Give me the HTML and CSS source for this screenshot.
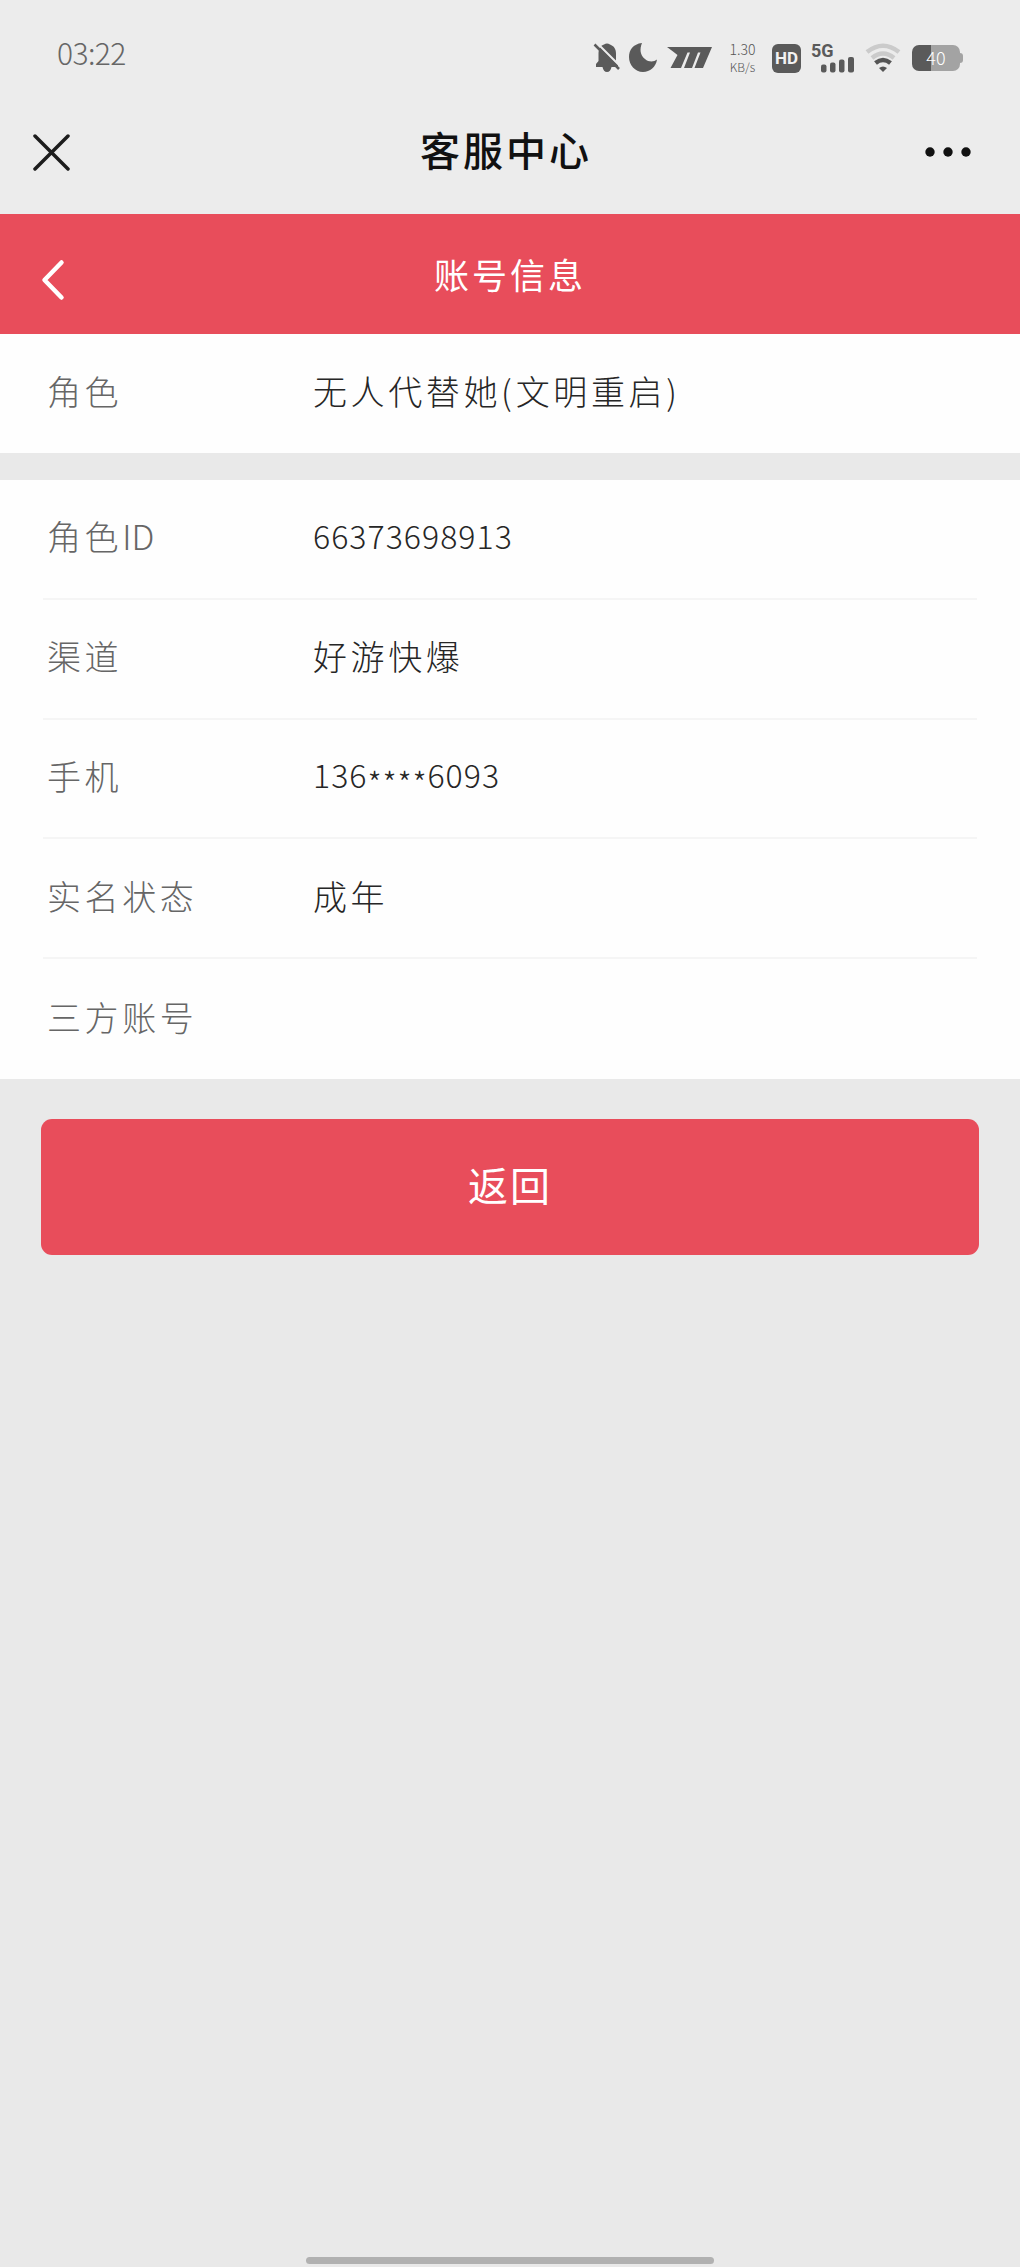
FILE: index.html
```html
<!DOCTYPE html>
<html lang="zh-CN">
<head>
  <meta charset="utf-8">
  <title>客服中心</title>
  <link rel="stylesheet" href="styles.css">
</head>
<body>
<div id="container">

  <div id="status_bar">
    <span class="time">03:22</span>
    <div class="status_icons">
      <svg class="bell" width="28" height="32" viewBox="0 0 28 32">
        <path d="M3 25V22L5.500 19V12C5.500 6 8 3.500 11 2.500Q14 .500 17 2.500C21 4 23 7 23 12V19L25 22V25H18.500Q17.500 30 14 30Q10.500 30 9.500 25Z" fill="#5a5a5a"/>
        <path d="M3 0L28 25" stroke="#ececec" stroke-width="2"/>
        <path d="M1.500 2.500L26 27" stroke="#5a5a5a" stroke-width="2.500"/>
      </svg>
      <svg class="moon" width="30" height="32" viewBox="0 0 30 32">
        <path d="M14 1C5 2 1 8 1 15C1 23 7 30 15 30C22 30 28 25 29 17.500C26 20 21 20.500 17 17C12 13 11.500 7 14 1Z" fill="#5a5a5a"/>
      </svg>
      <svg class="mlogo" width="46" height="24" viewBox="0 0 46 24">
        <path d="M0 1H45L36 22H27.500L33.500 6.500H31L25 22H17L23 6.500H20.500L14 22H3.500L10.500 9L6 5.500Z" fill="#5a5a5a"/>
      </svg>
      <div class="speed"><span>1.30</span><span>KB/s</span></div>
      <span class="hd">HD</span>
      <div class="signal">
        <span>5G</span>
        <svg width="34" height="17" viewBox="0 0 34 17" fill="#5a5a5a">
          <rect x="0" y="8.500" width="5.500" height="8" rx="2"/>
          <rect x="9" y="6.500" width="5.500" height="10" rx="2"/>
          <rect x="18" y="3.500" width="5.500" height="13" rx="2"/>
          <rect x="27" y="1" width="6" height="15.500" rx="2"/>
        </svg>
      </div>
      <svg class="wifi" width="36" height="30" viewBox="0 0 36 30" fill="none">
        <path d="M2 9Q18 -3.500 34 9" stroke="#cbcbcb" stroke-width="4.500"/>
        <path d="M7 15Q18 6 29 15" stroke="#cbcbcb" stroke-width="4.500"/>
        <path d="M10.500 20Q18 14 25.500 20" stroke="#555" stroke-width="4.500"/>
        <path d="M14 25Q18 22 22 25L18 29Z" fill="#555"/>
      </svg>
      <div class="battery"><span>40</span></div>
    </div>
  </div>

  <div id="top_menu">
    <svg width="37" height="37" viewBox="0 0 37 37">
      <path d="M2 2L35 35M35 2L2 35" stroke="#1c1c1c" stroke-width="3.500" stroke-linecap="round"/>
    </svg>
    <h1>客服中心</h1>
    <svg width="48" height="12" viewBox="0 0 48 12" fill="#111">
      <circle cx="6" cy="6" r="4.700"/>
      <circle cx="24" cy="6" r="4.700"/>
      <circle cx="42" cy="6" r="4.700"/>
    </svg>
  </div>

  <div id="page_header">
    <svg width="24" height="42" viewBox="0 0 24 42">
      <path d="M20.500 3.500L3.500 21L20.500 38.500" fill="none" stroke="#fff" stroke-width="4.500" stroke-linecap="round" stroke-linejoin="round"/>
    </svg>
    <h2>账号信息</h2>
  </div>

  <div class="list">
    <div class="row"><span class="label">角色</span><span class="value">无人代替她<i class="open_paren">(</i>文明重启<i>)</i></span></div>
  </div>

  <div class="list">
    <div class="row"><span class="label">角色<i>ID</i></span><span class="value number">66373698913</span></div>
    <div class="row"><span class="label">渠道</span><span class="value">好游快爆</span></div>
    <div class="row"><span class="label">手机</span><span class="value number">136<i class="mask">****</i>6093</span></div>
    <div class="row"><span class="label">实名状态</span><span class="value">成年</span></div>
    <div class="row"><span class="label">三方账号</span><span class="value"></span></div>
  </div>

  <button class="back_btn">返回</button>

  <div id="home_bar"></div>

</div>
</body>
</html>
```

FILE: styles.css
```css
html, body {
  height: 100%;
  margin: 0;
}
body {
  background-color: #e9e9e9;
  font-family: "Noto Sans CJK SC", sans-serif;
  font-weight: 300;
  overflow: hidden;
}
i {
  font-style: normal;
  letter-spacing: 0;
}
svg {
  display: block;
  flex: none;
}

#container {
  height: 100%;
  display: flex;
  flex-direction: column;
}

/* status bar */
#status_bar {
  height: 90px;
  box-sizing: border-box;
  padding: 28px 60px 0 57px;
  background: #ececec;
  display: flex;
  justify-content: space-between;
}
.time {
  height: 48px;
  line-height: 48px;
  font-size: 30px;
  letter-spacing: -0.6px;
  color: #666;
}
.status_icons {
  height: 60px;
  display: flex;
  align-items: center;
}
.moon {
  margin-left: 7px;
}
.mlogo {
  margin-left: 9px;
}
.speed {
  width: 29px;
  margin-left: 15px;
  margin-right: 2px;
  font-size: 14px;
  line-height: 18px;
  color: #555;
  display: flex;
  flex-direction: column;
  align-items: center;
  white-space: nowrap;
}
.speed span + span {
  font-size: 12px;
}
.hd {
  width: 29px;
  height: 29px;
  margin-left: 13px;
  border-radius: 6px;
  background: #5a5a5a;
  color: #f2f2f2;
  font: bold 17px/29px "Roboto", sans-serif;
  text-align: center;
}
.signal {
  width: 43px;
  height: 30px;
  margin-left: 10px;
  font: bold 18px/15px "Roboto", sans-serif;
  color: #5a5a5a;
  display: flex;
  flex-direction: column;
}
.signal svg {
  margin-left: 10px;
  margin-top: -2px;
}
.wifi {
  margin-left: 11px;
}
.battery {
  width: 48px;
  height: 26px;
  margin-left: 11px;
  border-radius: 7px;
  background: linear-gradient(90deg, #5a5a5a 19px, #a3a3a3 19px);
  color: #fff;
  font-size: 18px;
  line-height: 25px;
  text-align: center;
  position: relative;
}
.battery:after {
  content: "";
  position: absolute;
  right: -3px;
  top: 8px;
  width: 3px;
  height: 10px;
  border-radius: 0 3px 3px 0;
  background: #a3a3a3;
}

#top_menu {
  height: 124px;
  box-sizing: border-box;
  padding: 0 47px 0 33px;
  background: #ececec;
  display: grid;
  grid-template-columns: 48px 1fr 48px;
  align-items: center;
}
#top_menu svg:last-child {
  margin-left: -1px;
}
h1 {
  margin: 0 0 6px;
  padding-left: 6px;
  font-size: 40px;
  font-weight: 500;
  letter-spacing: 3px;
  text-align: center;
  color: #111;
}

#page_header {
  height: 120px;
  box-sizing: border-box;
  padding: 0 65px 0 41px;
  background: #e84d5b;
  display: grid;
  grid-template-columns: 24px 1fr;
  align-items: center;
}
#page_header svg {
  margin-top: 12px;
}
h2 {
  margin: 0 0 2px;
  font-size: 35px;
  font-weight: 400;
  letter-spacing: 3px;
  text-align: center;
  color: #fff;
}

/* info rows */
.list {
  padding: 0 43px;
  margin-bottom: 27px;
  background: #fefefe;
}
.row {
  height: 119.8px;
  box-sizing: border-box;
  padding: 0 4px 6px;
  border-bottom: 2px solid #f5f5f5;
  display: flex;
  align-items: center;
  font-size: 34px;
  letter-spacing: 3.6px;
}
.row:last-child {
  border-bottom: none;
}
.list:nth-child(4) .row {
  height: 119px;
}
.label {
  width: 266px;
  color: #666;
}
.value {
  color: #262626;
}
.open_paren {
  margin-right: 4px;
}
.number {
  padding-bottom: 2px;
  font-size: 32px;
  letter-spacing: 1.05px;
}
.mask {
  line-height: 0;
  vertical-align: -8px;
  letter-spacing: 0.8px;
}

.back_btn {
  height: 136px;
  margin: 13px 41px 0;
  padding: 0 0 5px;
  border: none;
  border-radius: 11px;
  background: #e84d5b;
  color: #fff;
  font-family: inherit;
  font-size: 40px;
  letter-spacing: 2px;
}

#home_bar {
  width: 408px;
  height: 7px;
  margin: auto auto 3px;
  border-radius: 4px;
  background: #b1b1b1;
}
```
